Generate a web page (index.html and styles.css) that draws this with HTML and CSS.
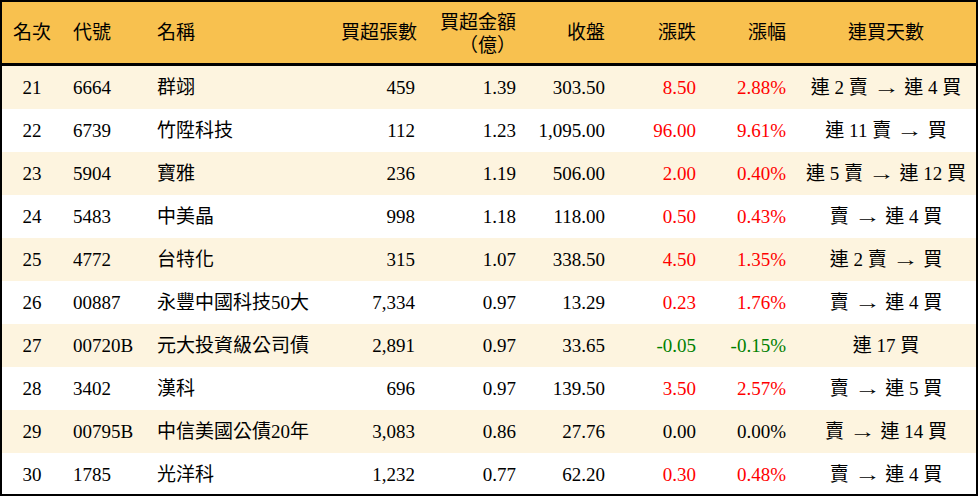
FILE: index.html
```html
<!DOCTYPE html>
<html lang="zh-Hant">
<head>
<meta charset="utf-8">
<title>買超排行</title>
<link rel="stylesheet" href="styles.css">
</head>
<body>
<div class="frame">
<table class="rank">
<colgroup>
<col class="w-rank"><col class="w-code"><col class="w-name"><col class="w-vol"><col class="w-amt"><col class="w-close"><col class="w-chg"><col class="w-pct"><col class="w-days">
</colgroup>
<thead>
<tr>
<th class="c">名次</th><th class="l">代號</th><th class="l">名稱</th><th class="r">買超張數</th><th class="r two">買超金額<br>（億）</th><th class="r">收盤</th><th class="r">漲跌</th><th class="r">漲幅</th><th class="c">連買天數</th>
</tr>
</thead>
<tbody>
<tr><td class="c">21</td><td class="l">6664</td><td class="l">群翊</td><td class="r">459</td><td class="r">1.39</td><td class="r">303.50</td><td class="r up">8.50</td><td class="r up">2.88%</td><td class="c">連 2 賣 <span class="arrow">→</span> 連 4 買</td></tr>
<tr><td class="c">22</td><td class="l">6739</td><td class="l">竹陞科技</td><td class="r">112</td><td class="r">1.23</td><td class="r">1,095.00</td><td class="r up">96.00</td><td class="r up">9.61%</td><td class="c">連 11 賣 <span class="arrow">→</span> 買</td></tr>
<tr><td class="c">23</td><td class="l">5904</td><td class="l">寶雅</td><td class="r">236</td><td class="r">1.19</td><td class="r">506.00</td><td class="r up">2.00</td><td class="r up">0.40%</td><td class="c">連 5 賣 <span class="arrow">→</span> 連 12 買</td></tr>
<tr><td class="c">24</td><td class="l">5483</td><td class="l">中美晶</td><td class="r">998</td><td class="r">1.18</td><td class="r">118.00</td><td class="r up">0.50</td><td class="r up">0.43%</td><td class="c">賣 <span class="arrow">→</span> 連 4 買</td></tr>
<tr><td class="c">25</td><td class="l">4772</td><td class="l">台特化</td><td class="r">315</td><td class="r">1.07</td><td class="r">338.50</td><td class="r up">4.50</td><td class="r up">1.35%</td><td class="c">連 2 賣 <span class="arrow">→</span> 買</td></tr>
<tr><td class="c">26</td><td class="l">00887</td><td class="l">永豐中國科技50大</td><td class="r">7,334</td><td class="r">0.97</td><td class="r">13.29</td><td class="r up">0.23</td><td class="r up">1.76%</td><td class="c">賣 <span class="arrow">→</span> 連 4 買</td></tr>
<tr><td class="c">27</td><td class="l">00720B</td><td class="l">元大投資級公司債</td><td class="r">2,891</td><td class="r">0.97</td><td class="r">33.65</td><td class="r down">-0.05</td><td class="r down">-0.15%</td><td class="c">連 17 買</td></tr>
<tr><td class="c">28</td><td class="l">3402</td><td class="l">漢科</td><td class="r">696</td><td class="r">0.97</td><td class="r">139.50</td><td class="r up">3.50</td><td class="r up">2.57%</td><td class="c">賣 <span class="arrow">→</span> 連 5 買</td></tr>
<tr><td class="c">29</td><td class="l">00795B</td><td class="l">中信美國公債20年</td><td class="r">3,083</td><td class="r">0.86</td><td class="r">27.76</td><td class="r">0.00</td><td class="r">0.00%</td><td class="c">賣 <span class="arrow">→</span> 連 14 買</td></tr>
<tr><td class="c">30</td><td class="l">1785</td><td class="l">光洋科</td><td class="r">1,232</td><td class="r">0.77</td><td class="r">62.20</td><td class="r up">0.30</td><td class="r up">0.48%</td><td class="c">賣 <span class="arrow">→</span> 連 4 買</td></tr>
</tbody>
</table>
</div>
</body>
</html>
```
FILE: styles.css
```css
html, body {
  margin: 0;
  padding: 0;
  background: #ffffff;
}
.frame {
  width: 978px;
  height: 496px;
  box-sizing: border-box;
  border: 2px solid #000000;
  overflow: hidden;
}
.rank {
  width: 974px;
  border-collapse: collapse;
  table-layout: fixed;
  font-family: "Liberation Serif", "Noto Sans CJK TC", serif;
  font-size: 19px;
  color: #000000;
}
.w-rank { width: 60px; }
.w-code { width: 84px; }
.w-name { width: 184px; }
.w-vol { width: 95px; }
.w-amt { width: 101px; }
.w-close { width: 89px; }
.w-chg { width: 91px; }
.w-pct { width: 90px; }
.w-days { width: 180px; }
.rank th {
  background: #f8c14f;
  height: 59px;
  font-weight: normal;
  padding: 0 10px 0 11px;
  border-bottom: 3px solid #000000;
  line-height: 24px;
  white-space: nowrap;
}
.rank th.two {
  line-height: 23px;
  padding-top: 2px;
}
.rank td {
  height: 43px;
  padding: 0 10px 0 11px;
  white-space: nowrap;
  line-height: 24px;
}
.rank tbody tr:nth-child(odd) td {
  background: #fdf4df;
}
.c { text-align: center; }
.l { text-align: left; }
.r { text-align: right; }
.rank th.c, .rank td.c { padding: 0 4px; }
.up { color: #ff0000; }
.down { color: #008000; }
.arrow {
  font-family: "Liberation Serif", serif;
  font-size: 19px;
  display: inline-block;
  transform: scaleX(1.4);
  margin: 0 4px;
}
```
